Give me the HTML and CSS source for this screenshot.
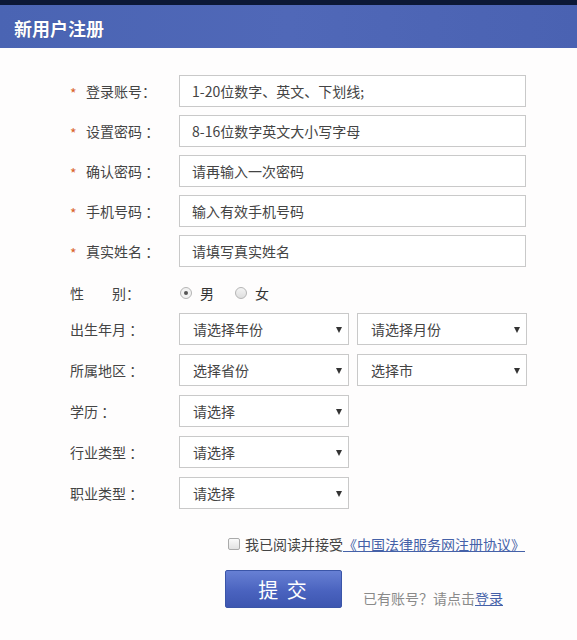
FILE: index.html
```html
<!DOCTYPE html>
<html lang="zh">
<head>
<meta charset="utf-8">
<link rel="stylesheet" href="styles.css">
</head>
<body>
<div class="topbar"></div>
<header class="header"><h1 class="title">新用户注册</h1></header>
<form class="form">
  <div class="row"><label class="label"><span class="star">*</span>登录账号：</label><div class="input">1-20位数字、英文、下划线;</div></div>
  <div class="row"><label class="label"><span class="star">*</span>设置密码 ：</label><div class="input">8-16位数字英文大小写字母</div></div>
  <div class="row"><label class="label"><span class="star">*</span>确认密码 ：</label><div class="input">请再输入一次密码</div></div>
  <div class="row"><label class="label"><span class="star">*</span>手机号码 ：</label><div class="input">输入有效手机号码</div></div>
  <div class="row"><label class="label"><span class="star">*</span>真实姓名 ：</label><div class="input">请填写真实姓名</div></div>
  <div class="row row-gender"><label class="label label-plain">性　　别：</label>
    <div class="radios">
      <span class="radio radio-on"></span><span class="rtext">男</span>
      <span class="radio"></span><span class="rtext">女</span>
    </div>
  </div>
  <div class="row row-sel"><label class="label label-plain">出生年月 ：</label><div class="select">请选择年份<span class="arrow"></span></div><div class="select">请选择月份<span class="arrow"></span></div></div>
  <div class="row row-sel"><label class="label label-plain">所属地区 ：</label><div class="select">选择省份<span class="arrow"></span></div><div class="select">选择市<span class="arrow"></span></div></div>
  <div class="row row-sel"><label class="label label-plain">学历 ：</label><div class="select">请选择<span class="arrow"></span></div></div>
  <div class="row row-sel"><label class="label label-plain">行业类型 ：</label><div class="select">请选择<span class="arrow"></span></div></div>
  <div class="row row-sel"><label class="label label-plain">职业类型 ：</label><div class="select">请选择<span class="arrow"></span></div></div>
  <div class="agree"><span class="checkbox"></span>我已阅读并接受<a class="link" href="#">《中国法律服务网注册协议》</a></div>
  <div class="actions"><button class="submit" type="button">提 交</button><span class="login">已有账号？请点击<a class="link" href="#">登录</a></span></div>
</form>
</body>
</html>
```
FILE: styles.css
```css
* { box-sizing: border-box; }
body {
  margin: 0;
  background: #fefdfd;
  font-family: "Noto Sans CJK SC", "Liberation Sans", sans-serif;
  color: #333;
  font-size: 14px;
}
.topbar { height: 5px; background: #0c1836; }
.header {
  height: 43px;
  background: linear-gradient(90deg, #4a64b3 0%, #5068b8 50%, #4a62b2 100%);
  display: flex;
  align-items: center;
  padding-left: 14px;
}
.title {
  margin: 0;
  color: #fff;
  font-size: 18px;
  font-weight: bold;
  padding-top: 2px;
  text-shadow: 0 0 1px rgba(0, 0, 0, 0.3);
}
.form {
  padding: 27px 0 0 70px;
  display: flex;
  flex-direction: column;
}
.row {
  display: flex;
  align-items: center;
  height: 32px;
  margin-bottom: 8px;
}
.label {
  width: 109px;
  flex: none;
  color: #444;
  font-size: 14px;
  display: flex;
  align-items: center;
  white-space: pre;
}
.star {
  color: #d9632b;
  width: 16px;
  font-size: 14px;
  padding-top: 4px;
}
.input {
  width: 347px;
  height: 32px;
  border: 1px solid #c9c9c9;
  background: #fff;
  padding-left: 12px;
  display: flex;
  align-items: center;
  font-size: 14px;
  color: #444;
}
.row-gender { margin-top: 2px; margin-bottom: 4px; }
.radios { display: flex; align-items: center; padding-left: 1px; }
.radio {
  width: 12px; height: 12px;
  border-radius: 50%;
  border: 1px solid #b5b5b5;
  background: linear-gradient(#f4f4f4, #dedede);
  margin-right: 8px;
  position: relative;
}
.radio-on { background: #f2f2f2; }
.radio-on::after {
  content: "";
  position: absolute;
  left: 3px; top: 3px;
  width: 4px; height: 4px;
  border-radius: 50%;
  background: #555;
}
.rtext { margin-right: 21px; font-size: 14px; color: #333; }
.row-sel { margin-bottom: 9px; }
.select {
  width: 170px;
  height: 32px;
  border: 1px solid #c9c9c9;
  background: #fff;
  padding-left: 13px;
  display: flex;
  align-items: center;
  font-size: 14px;
  color: #444;
  position: relative;
  margin-right: 8px;
}
.arrow {
  position: absolute;
  right: 6px;
  top: 13px;
  width: 0; height: 0;
  border-left: 3.5px solid transparent;
  border-right: 3.5px solid transparent;
  border-top: 6px solid #333;
}
.agree {
  display: flex;
  align-items: center;
  margin: 16px 0 0 158px;
  font-size: 14px;
  color: #444;
  height: 20px;
}
.checkbox {
  width: 12px; height: 12px;
  border: 1px solid #aaa;
  border-radius: 2px;
  background: linear-gradient(#fafafa, #e2e2e2);
  margin-right: 5px;
}
.link { color: #4561a8; text-decoration: underline; }
.actions {
  display: flex;
  align-items: center;
  margin: 16px 0 0 155px;
}
.submit {
  width: 117px;
  height: 38px;
  border: 1px solid #3a55a8;
  border-radius: 2px;
  background: linear-gradient(#6780d4, #4a63bf 55%, #3d56b0);
  color: #fff;
  font-family: "Noto Sans CJK SC", sans-serif;
  font-size: 20px;
  letter-spacing: 2px;
  padding: 0;
}
.login {
  margin-left: 21px;
  margin-top: 18px;
  color: #8a8a8a;
  font-size: 14px;
}
```
